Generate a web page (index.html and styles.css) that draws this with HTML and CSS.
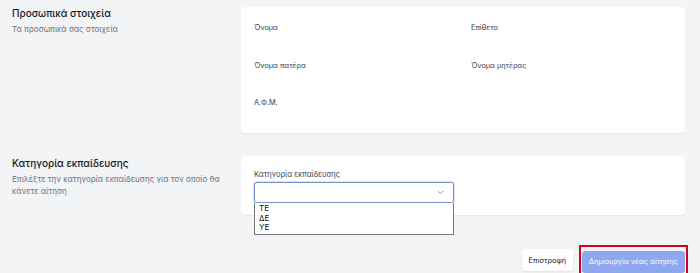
FILE: index.html
```html
<!DOCTYPE html>
<html lang="el">
  <head>
    <meta charset="UTF-8" />
    <meta name="viewport" content="width=device-width, initial-scale=1.0" />
    <title>Νέα αίτηση</title>
    <link rel="stylesheet" href="styles.css">
  </head>
  <body>
    <div class="page">
      <div class="section">
        <div class="section-info">
          <h3>Προσωπικά στοιχεία</h3>
          <p>Τα προσωπικά σας στοιχεία</p>
        </div>
        <div class="card card-personal">
          <div class="fields">
            <div class="field"><label>Όνομα</label></div>
            <div class="field"><label>Επίθετο</label></div>
            <div class="field"><label>Όνομα πατέρα</label></div>
            <div class="field"><label>Όνομα μητέρας</label></div>
            <div class="field"><label>Α.Φ.Μ.</label></div>
          </div>
        </div>
      </div>

      <div class="section section-second">
        <div class="section-info">
          <h3>Κατηγορία εκπαίδευσης</h3>
          <p>Επιλέξτε την κατηγορία εκπαίδευσης για τον οποίο θα κάνετε αίτηση</p>
        </div>
        <div class="card card-select">
          <label class="select-label">Κατηγορία εκπαίδευσης</label>
          <div class="select-wrap">
            <div class="select">
              <svg class="chevron" width="7" height="5" viewBox="0 0 7 5">
                <path d="M1 1.2l2.5 2.5 2.5-2.5" fill="none" stroke="#8b93a1" stroke-width="1" stroke-linecap="round" stroke-linejoin="round"/>
              </svg>
            </div>
            <ul class="options">
              <li>ΤΕ</li>
              <li>ΔΕ</li>
              <li>ΥΕ</li>
            </ul>
          </div>
        </div>
      </div>

      <div class="actions">
        <button class="btn btn-back">Επιστροφή</button>
        <div class="highlight">
          <button class="btn btn-primary">Δημιουργία νέας αίτησης</button>
        </div>
      </div>
    </div>
  </body>
</html>
```

FILE: styles.css
```css
body {
  font-family: Inter, "Noto Sans", sans-serif;
  margin: 0;
  padding: 0;
  background-color: #f3f4f6;
  color: #111827;
}

.page {
  width: 700px;
  height: 273px;
  overflow: hidden;
  padding-top: 7px;
  box-sizing: border-box;
}

.section {
  display: flex;
}

.section-second {
  margin-top: 23px;
}

.section-info {
  width: 229px;
  padding-left: 12px;
}

.section-info h3 {
  margin: 0;
  font-size: 10px;
  font-weight: 500;
  line-height: 13px;
  color: #111827;
}

.section-info p {
  margin: 3px 0 0;
  font-size: 8px;
  line-height: 12px;
  color: #6b7280;
  width: 214px;
}

.section-second .section-info h3 {
  margin-top: 1px;
}

.card {
  width: 444px;
  background-color: #fff;
  border-radius: 4px;
  box-shadow: 0 1px 2px rgba(0, 0, 0, 0.06);
  box-sizing: border-box;
  padding: 14px 13px 0;
}

.card-personal {
  height: 126px;
}

.fields {
  display: grid;
  grid-template-columns: 201px 201px;
  column-gap: 16px;
  row-gap: 24.5px;
}

.field {
  height: 13px;
}

.field label,
.select-label {
  display: block;
  font-size: 7.3px;
  line-height: 13px;
  color: #374151;
}

.card-select {
  height: 59px;
  padding-top: 12px;
}

.select-label {
  font-size: 7.5px;
  margin-bottom: 1px;
}

.select-wrap {
  position: relative;
  width: 200px;
}

.select {
  height: 21px;
  border: 1px solid #7b93c9;
  border-radius: 3px;
  box-sizing: border-box;
  background-color: #fff;
  box-shadow: 0 0 0 1px rgba(147, 168, 228, 0.35);
}

.chevron {
  position: absolute;
  right: 10px;
  top: 8px;
}

.options {
  position: absolute;
  top: 21px;
  left: 0;
  width: 200px;
  margin: 0;
  padding: 1px 0 1px;
  list-style: none;
  background-color: #fff;
  border: 1px solid #767676;
  border-top: none;
  box-sizing: border-box;
}

.options li {
  font-size: 8px;
  line-height: 9.7px;
  padding-left: 4px;
  color: #111;
}

.actions {
  display: flex;
  justify-content: flex-end;
  align-items: center;
  margin-top: 30px;
  padding-right: 12px;
}

.btn {
  font-family: Inter, "Noto Sans", sans-serif;
  font-size: 7.3px;
  height: 22px;
  border: none;
  border-radius: 3px;
  padding: 0 7px;
  white-space: nowrap;
  cursor: pointer;
}

.btn-back {
  background-color: #fff;
  color: #111827;
  box-shadow: 0 1px 2px rgba(0, 0, 0, 0.08);
  margin-right: 6px;
}

.highlight {
  border: 2px solid #d0021b;
  padding: 1px;
}

.btn-primary {
  background-color: #8da8ee;
  color: #fff;
  width: 103px;
  padding: 0;
}
```
